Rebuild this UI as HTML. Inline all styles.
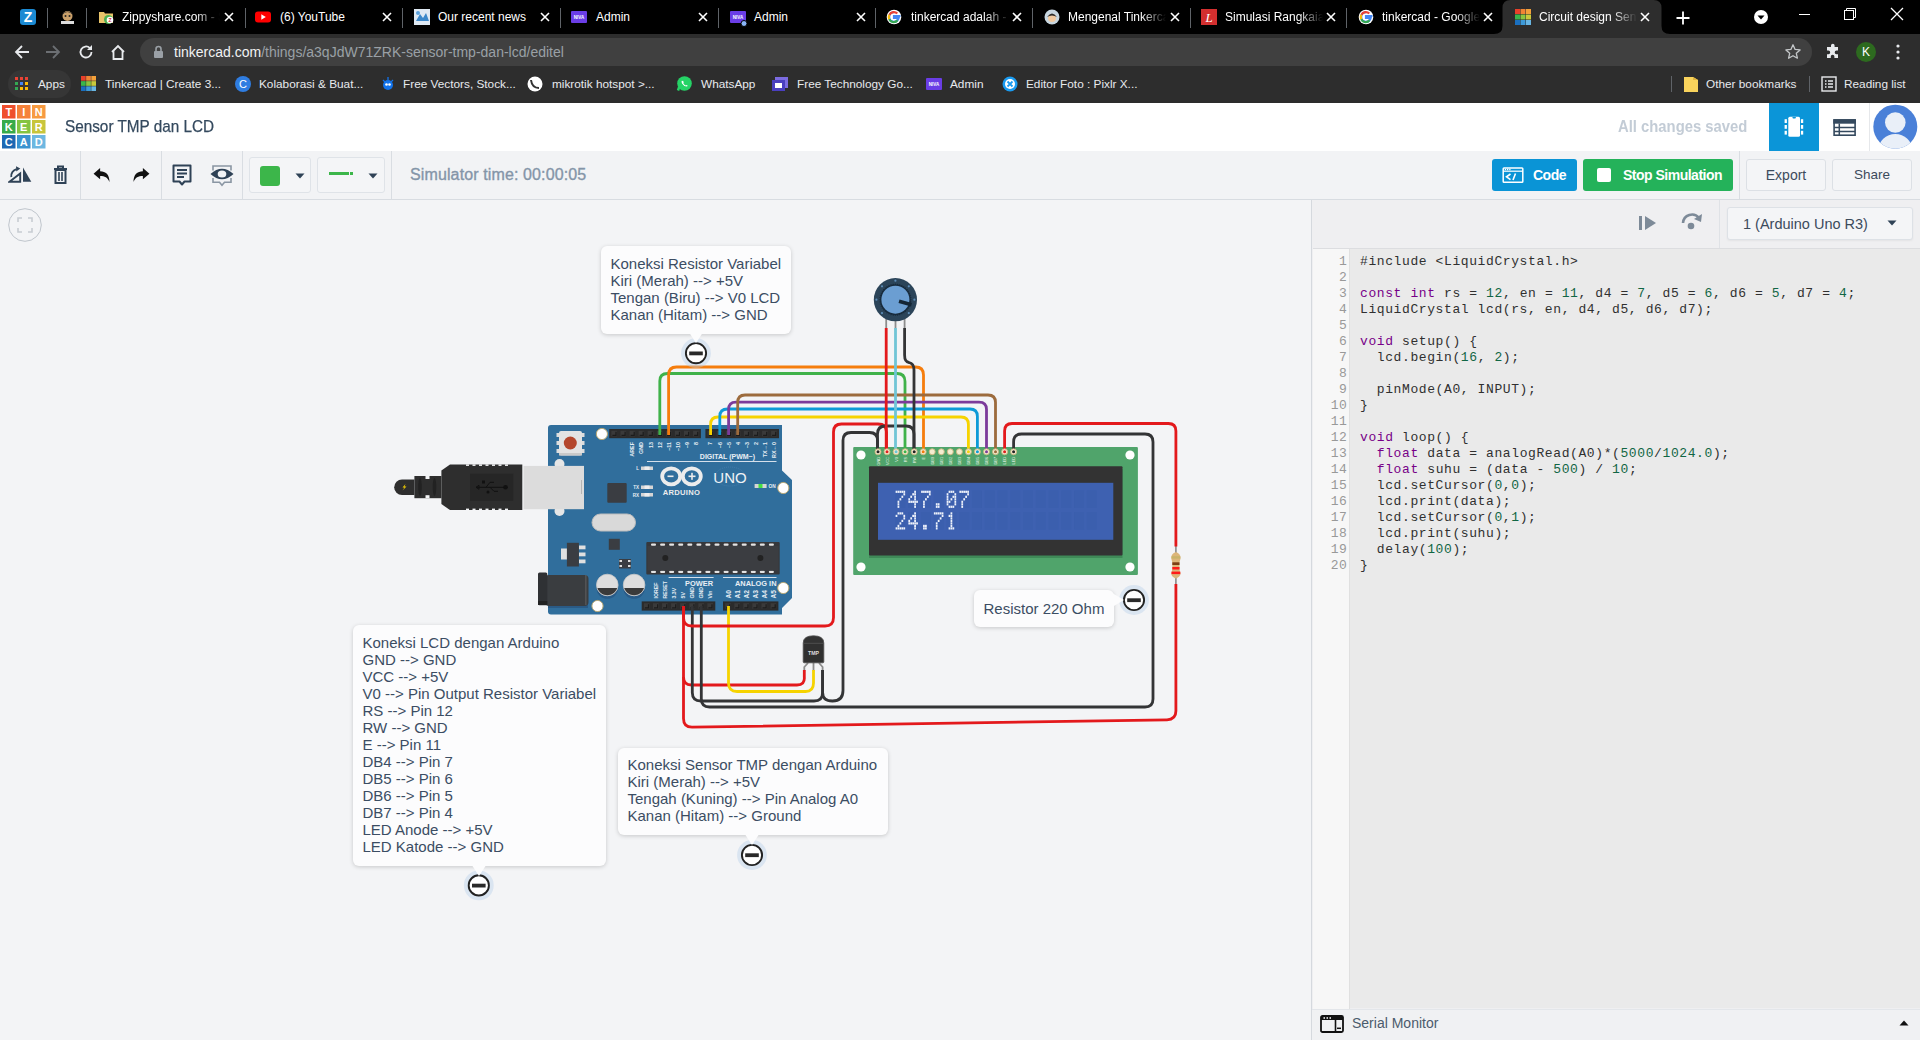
<!DOCTYPE html>
<html><head><meta charset="utf-8">
<style>
*{box-sizing:border-box;margin:0;padding:0}
html,body{width:1920px;height:1040px;overflow:hidden;background:#f3f4f6;font-family:"Liberation Sans",sans-serif}
.a{position:absolute}
#tabs{left:0;top:0;width:1920px;height:34px;background:#000}
#tb{left:0;top:34px;width:1920px;height:69px;background:#2d2d2d}
.tab{position:absolute;top:0;height:34px;color:#fff;font-size:12px;line-height:34px;white-space:nowrap}
.sep{position:absolute;top:8px;width:1px;height:20px;background:#5f6368}
.tt{position:absolute;top:0;overflow:hidden;width:88px}
.fade{-webkit-mask-image:linear-gradient(90deg,#000 75%,transparent)}
.cls{position:absolute;top:0;font-size:15px;color:#fff}
.bm{position:absolute;top:68px;height:32px;line-height:32px;color:#e8eaed;font-size:11.8px;white-space:nowrap}
#hdr{left:0;top:103px;width:1920px;height:48px;background:#fff;box-shadow:0 1px 3px rgba(0,0,0,.08)}
#tool{left:0;top:151px;width:1920px;height:49px;background:#f2f3f5;border-bottom:1px solid #d8dce1}
.vs{position:absolute;width:1px;background:#d9dde2}
#panel{left:1311px;top:200px;width:609px;height:840px;background:#efeff1;border-left:1px solid #d5d9de}
#code{left:1313px;top:248px;width:607px;height:760px;background:#eaeaea;border-top:1px solid #dcdde0}
#gut{left:1313px;top:249px;width:37px;height:760px;background:#f7f7f7;border-right:1px solid #e0e0e0}
pre{font-family:"Liberation Mono",monospace;font-size:13px;letter-spacing:0.6px;line-height:16px;color:#303030}
.k{color:#770088}.n{color:#116644}
.ln{position:absolute;left:1313px;top:254px;width:34.5px;text-align:right;font-family:"Liberation Mono",monospace;font-size:13px;letter-spacing:0.6px;line-height:16px;color:#999}
.note{position:absolute;background:#fcfcfd;border-radius:6px;box-shadow:0 1px 4px rgba(0,0,0,.18);color:#3b4d63;font-size:15px;line-height:17px;white-space:pre}
</style></head><body>
<div id="tabs" class="a"></div>
<div id="tb" class="a"></div>
<!-- ===== CHROME TAB STRIP ===== -->
<div class="a" style="left:20px;top:9px;width:16px;height:16px;background:#1b8ad3;border-radius:3px;color:#fff;font:bold 14px/16px 'Liberation Sans',sans-serif;text-align:center">Z</div>
<div class="sep" style="left:47px"></div>
<svg class="a" style="left:59px;top:9px" width="17" height="16" viewBox="0 0 17 16"><circle cx="8.5" cy="7" r="5" fill="#caa06a"/><path d="M3 6 Q8.5 0 14 6 L13 4 Q8.5 1 4 4Z" fill="#2b2b2b"/><circle cx="6.5" cy="7" r="1" fill="#222"/><circle cx="10.5" cy="7" r="1" fill="#222"/><rect x="2" y="12" width="13" height="3" fill="#ddd"/></svg>
<div class="sep" style="left:86px"></div>
<!-- Zippyshare -->
<svg class="a" style="left:98px;top:9px" width="16" height="16" viewBox="0 0 16 16"><path d="M1 3h5l1 1.5h8v9.5H1z" fill="#e9c46a"/><circle cx="10.5" cy="10.5" r="4.5" fill="#4caf50"/><circle cx="12" cy="11" r="3.3" fill="#fff"/><text x="12" y="13" font-size="5" font-weight="bold" text-anchor="middle" fill="#d32f2f" font-family="Liberation Sans">Z</text></svg>
<div class="tab" style="left:122px"><div class="tt fade" style="width:98px">Zippyshare.com - Share</div></div>
<svg class="a" style="left:224px;top:12px" width="10" height="10" viewBox="0 0 10 10"><path d="M1 1L9 9M9 1L1 9" stroke="#fff" stroke-width="1.6"/></svg>
<div class="sep" style="left:245px"></div>
<!-- YouTube -->
<svg class="a" style="left:255px;top:10px" width="16" height="14" viewBox="0 0 16 14"><rect x="0" y="1.5" width="16" height="11" rx="3" fill="#f00"/><path d="M6.3 4.3v5.4L10.8 7z" fill="#fff"/></svg>
<div class="tab" style="left:280px">(6) YouTube</div>
<svg class="a" style="left:382px;top:12px" width="10" height="10" viewBox="0 0 10 10"><path d="M1 1L9 9M9 1L1 9" stroke="#fff" stroke-width="1.6"/></svg>
<div class="sep" style="left:402px"></div>
<!-- Our recent news -->
<svg class="a" style="left:414px;top:9px" width="16" height="16" viewBox="0 0 16 16"><rect width="16" height="16" fill="#dfe9f3"/><path d="M2 12 L6 5 L9 9 L12 4 L15 12Z" fill="#3b87c9"/><circle cx="4" cy="4" r="2" fill="#5aa0dc"/></svg>
<div class="tab" style="left:438px">Our recent news</div>
<svg class="a" style="left:540px;top:12px" width="10" height="10" viewBox="0 0 10 10"><path d="M1 1L9 9M9 1L1 9" stroke="#fff" stroke-width="1.6"/></svg>
<div class="sep" style="left:560px"></div>
<!-- Admin -->
<svg class="a" style="left:571px;top:9px" width="16" height="16" viewBox="0 0 16 16"><rect y="2" width="16" height="12" rx="1" fill="#6a3de6"/><text x="8" y="10" font-size="4.5" font-weight="bold" text-anchor="middle" fill="#fff" font-family="Liberation Sans">NIVA</text></svg>
<div class="tab" style="left:596px">Admin</div>
<svg class="a" style="left:698px;top:12px" width="10" height="10" viewBox="0 0 10 10"><path d="M1 1L9 9M9 1L1 9" stroke="#fff" stroke-width="1.6"/></svg>
<div class="sep" style="left:718px"></div>
<svg class="a" style="left:730px;top:9px" width="18" height="18" viewBox="0 0 18 18"><rect y="2" width="16" height="12" rx="1" fill="#6a3de6"/><text x="8" y="10" font-size="4.5" font-weight="bold" text-anchor="middle" fill="#fff" font-family="Liberation Sans">NIVA</text><circle cx="14" cy="14.5" r="3" fill="#8ab4f8" stroke="#000" stroke-width="1"/></svg>
<div class="tab" style="left:754px">Admin</div>
<svg class="a" style="left:856px;top:12px" width="10" height="10" viewBox="0 0 10 10"><path d="M1 1L9 9M9 1L1 9" stroke="#fff" stroke-width="1.6"/></svg>
<div class="sep" style="left:875px"></div>
<!-- google -->
<svg class="a" style="left:886px;top:9px" width="16" height="16" viewBox="0 0 16 16"><circle cx="8" cy="8" r="7.3" fill="#fff"/><path d="M8 3.2a4.8 4.8 0 1 0 4.7 5.6H8V7h6.5" fill="none" stroke="#4285f4" stroke-width="2.2"/><path d="M3.5 5.8A4.8 4.8 0 0 1 11.3 4.6" fill="none" stroke="#ea4335" stroke-width="2.2"/><path d="M3.3 10.2A4.8 4.8 0 0 1 3.3 5.8" fill="none" stroke="#fbbc05" stroke-width="2.2"/><path d="M11.5 11.3A4.8 4.8 0 0 1 3.3 10.2" fill="none" stroke="#34a853" stroke-width="2.2"/></svg>
<div class="tab" style="left:911px"><div class="tt fade" style="width:98px">tinkercad adalah - Google</div></div>
<svg class="a" style="left:1012px;top:12px" width="10" height="10" viewBox="0 0 10 10"><path d="M1 1L9 9M9 1L1 9" stroke="#fff" stroke-width="1.6"/></svg>
<div class="sep" style="left:1032px"></div>
<!-- Mengenal -->
<svg class="a" style="left:1044px;top:9px" width="16" height="16" viewBox="0 0 16 16"><circle cx="8" cy="8" r="7.5" fill="#c8d6e0"/><circle cx="8" cy="9" r="4" fill="#f1c9a0"/><path d="M3 8 Q8 1 13 8 Q8 5 3 8Z" fill="#2b2b2b"/></svg>
<div class="tab" style="left:1068px"><div class="tt fade" style="width:98px">Mengenal Tinkercad</div></div>
<svg class="a" style="left:1170px;top:12px" width="10" height="10" viewBox="0 0 10 10"><path d="M1 1L9 9M9 1L1 9" stroke="#fff" stroke-width="1.6"/></svg>
<div class="sep" style="left:1190px"></div>
<!-- Simulasi -->
<svg class="a" style="left:1201px;top:9px" width="16" height="16" viewBox="0 0 16 16"><rect width="16" height="16" fill="#d32f2f"/><text x="8" y="13" font-size="13" font-style="italic" text-anchor="middle" fill="#fff" font-family="Liberation Serif">L</text></svg>
<div class="tab" style="left:1225px"><div class="tt fade" style="width:98px">Simulasi Rangkaian</div></div>
<svg class="a" style="left:1326px;top:12px" width="10" height="10" viewBox="0 0 10 10"><path d="M1 1L9 9M9 1L1 9" stroke="#fff" stroke-width="1.6"/></svg>
<div class="sep" style="left:1346px"></div>
<svg class="a" style="left:1358px;top:9px" width="16" height="16" viewBox="0 0 16 16"><circle cx="8" cy="8" r="7.3" fill="#fff"/><path d="M8 3.2a4.8 4.8 0 1 0 4.7 5.6H8V7h6.5" fill="none" stroke="#4285f4" stroke-width="2.2"/><path d="M3.5 5.8A4.8 4.8 0 0 1 11.3 4.6" fill="none" stroke="#ea4335" stroke-width="2.2"/><path d="M3.3 10.2A4.8 4.8 0 0 1 3.3 5.8" fill="none" stroke="#fbbc05" stroke-width="2.2"/><path d="M11.5 11.3A4.8 4.8 0 0 1 3.3 10.2" fill="none" stroke="#34a853" stroke-width="2.2"/></svg>
<div class="tab" style="left:1382px"><div class="tt fade" style="width:98px">tinkercad - Google Search</div></div>
<svg class="a" style="left:1483px;top:12px" width="10" height="10" viewBox="0 0 10 10"><path d="M1 1L9 9M9 1L1 9" stroke="#fff" stroke-width="1.6"/></svg>
<!-- active tab -->
<svg class="a" style="left:1490px;top:0" width="190" height="34" viewBox="1490 0 190 34"><path d="M1494,34 Q1502.5,34 1502.5,26 V8 Q1502.5,0 1510.5,0 H1653.5 Q1661.5,0 1661.5,8 V26 Q1661.5,34 1670,34 Z" fill="#2d2d2d"/></svg>
<svg class="a" style="left:1515px;top:9px" width="16" height="16" viewBox="0 0 16 16"><rect x="0" y="0" width="5" height="5" fill="#e8402a"/><rect x="5.5" y="0" width="5" height="5" fill="#f08434"/><rect x="11" y="0" width="5" height="5" fill="#f4a13a"/><rect x="0" y="5.5" width="5" height="5" fill="#3ab54a"/><rect x="5.5" y="5.5" width="5" height="5" fill="#8bc53f"/><rect x="11" y="5.5" width="5" height="5" fill="#c9c93b"/><rect x="0" y="11" width="5" height="5" fill="#1a6fbf"/><rect x="5.5" y="11" width="5" height="5" fill="#3d9ad9"/><rect x="11" y="11" width="5" height="5" fill="#69b6e3"/></svg>
<div class="tab" style="left:1539px"><div class="tt fade" style="width:98px">Circuit design Sensor TMP</div></div>
<svg class="a" style="left:1640px;top:12px" width="10" height="10" viewBox="0 0 10 10"><path d="M1 1L9 9M9 1L1 9" stroke="#fff" stroke-width="1.6"/></svg>
<svg class="a" style="left:1676px;top:11px" width="14" height="14" viewBox="0 0 14 14"><path d="M7,0.5 V13.5 M0.5,7 H13.5" stroke="#fff" stroke-width="1.8"/></svg>
<svg class="a" style="left:1753px;top:9px" width="16" height="16" viewBox="0 0 16 16"><circle cx="8" cy="8" r="7" fill="#fff"/><path d="M4.5 6.5h7L8 10.5z" fill="#000"/></svg>
<div class="a" style="left:1799px;top:14px;width:11px;height:1px;background:#fff"></div>
<svg class="a" style="left:1844px;top:8px" width="12" height="12" viewBox="0 0 12 12"><rect x="0.5" y="2.5" width="9" height="9" fill="none" stroke="#fff"/><path d="M2.5 2.5V0.5h9v9h-2" fill="none" stroke="#fff"/></svg>
<svg class="a" style="left:1890px;top:7px" width="14" height="14" viewBox="0 0 14 14"><path d="M1 1L13 13M13 1L1 13" stroke="#fff" stroke-width="1.3"/></svg>

<!-- ===== TOOLBAR ===== -->
<svg class="a" style="left:13px;top:43px" width="18" height="18" viewBox="0 0 18 18"><path d="M16 9H3M9 3L3 9l6 6" fill="none" stroke="#e8eaed" stroke-width="1.8"/></svg>
<svg class="a" style="left:44px;top:43px" width="18" height="18" viewBox="0 0 18 18"><path d="M2 9h13M9 3l6 6-6 6" fill="none" stroke="#6c6f73" stroke-width="1.8"/></svg>
<svg class="a" style="left:77px;top:43px" width="18" height="18" viewBox="0 0 18 18"><path d="M14.5 9A5.5 5.5 0 1 1 12.9 5.1" fill="none" stroke="#e8eaed" stroke-width="1.8"/><path d="M15 2v5h-5z" fill="#e8eaed"/></svg>
<svg class="a" style="left:109px;top:43px" width="18" height="18" viewBox="0 0 18 18"><path d="M3 9L9 3l6 6M4.5 8v8h9V8" fill="none" stroke="#e8eaed" stroke-width="1.8" stroke-linejoin="miter"/></svg>
<div class="a" style="left:140px;top:38px;width:1672px;height:28px;background:#404040;border-radius:14px"></div>
<svg class="a" style="left:153px;top:45px" width="11" height="14" viewBox="0 0 11 14"><rect x="1" y="6" width="9" height="7" rx="1" fill="#9aa0a6"/><path d="M3 6V4a2.5 2.5 0 0 1 5 0v2" fill="none" stroke="#9aa0a6" stroke-width="1.6"/></svg>
<div class="a" style="left:174px;top:43px;font-size:14px;line-height:18px;color:#9aa0a6;white-space:nowrap"><span style="color:#f1f3f4">tinkercad.com</span>/things/a3qJdW71ZRK-sensor-tmp-dan-lcd/editel</div>
<svg class="a" style="left:1784px;top:43px" width="18" height="18" viewBox="0 0 18 18"><path d="M9 1.8l2.1 4.6 5 .5-3.8 3.4 1.1 4.9L9 12.7l-4.4 2.5 1.1-4.9L1.9 6.9l5-.5z" fill="none" stroke="#c4c7c9" stroke-width="1.3" stroke-linejoin="round"/></svg>
<svg class="a" style="left:1824px;top:43px" width="18" height="18" viewBox="0 0 18 18"><path d="M7 2.5a1.8 1.8 0 0 1 3.6 0V4H14v3.6h-1.5a1.8 1.8 0 0 0 0 3.6H14V15H10.4v-1.5a1.8 1.8 0 0 0-3.6 0V15H3v-3.8h1.4a1.8 1.8 0 0 0 0-3.6H3V4h4z" fill="#e8eaed"/></svg>
<div class="a" style="left:1856px;top:42px;width:20px;height:20px;border-radius:50%;background:#2d6a1f;color:#fff;font-size:12px;line-height:20px;text-align:center">K</div>
<svg class="a" style="left:1896px;top:44px" width="4" height="16" viewBox="0 0 4 16"><circle cx="2" cy="2" r="1.6" fill="#e8eaed"/><circle cx="2" cy="8" r="1.6" fill="#e8eaed"/><circle cx="2" cy="14" r="1.6" fill="#e8eaed"/></svg>

<!-- ===== BOOKMARKS ===== -->
<div class="a" style="left:8px;top:70px;width:63px;height:28px;border-radius:14px;background:#363636"></div>
<svg class="a" style="left:15px;top:77px" width="14" height="14" viewBox="0 0 14 14"><g><rect x="0" y="0" width="3" height="3" fill="#ea4335"/><rect x="5" y="0" width="3" height="3" fill="#ea4335"/><rect x="10" y="0" width="3" height="3" fill="#ea4335"/><rect x="0" y="5" width="3" height="3" fill="#34a853"/><rect x="5" y="5" width="3" height="3" fill="#4285f4"/><rect x="10" y="5" width="3" height="3" fill="#fbbc05"/><rect x="0" y="10" width="3" height="3" fill="#34a853"/><rect x="5" y="10" width="3" height="3" fill="#fbbc05"/><rect x="10" y="10" width="3" height="3" fill="#fbbc05"/></g></svg>
<div class="bm" style="left:38px">Apps</div>
<svg class="a" style="left:81px;top:76px" width="15" height="15" viewBox="0 0 16 16"><rect x="0" y="0" width="5" height="5" fill="#e8402a"/><rect x="5.5" y="0" width="5" height="5" fill="#f08434"/><rect x="11" y="0" width="5" height="5" fill="#f4a13a"/><rect x="0" y="5.5" width="5" height="5" fill="#3ab54a"/><rect x="5.5" y="5.5" width="5" height="5" fill="#8bc53f"/><rect x="11" y="5.5" width="5" height="5" fill="#c9c93b"/><rect x="0" y="11" width="5" height="5" fill="#1a6fbf"/><rect x="5.5" y="11" width="5" height="5" fill="#3d9ad9"/><rect x="11" y="11" width="5" height="5" fill="#69b6e3"/></svg>
<div class="bm" style="left:105px">Tinkercad | Create 3...</div>
<div class="a" style="left:235px;top:76px;width:16px;height:16px;border-radius:50%;background:#2f7de1;color:#fff;font-size:11px;line-height:16px;text-align:center">C</div>
<div class="bm" style="left:259px">Kolaborasi &amp; Buat...</div>
<svg class="a" style="left:380px;top:76px" width="16" height="16" viewBox="0 0 16 16"><circle cx="8" cy="9" r="5" fill="#1273eb"/><circle cx="6.5" cy="8.5" r="1.3" fill="#fff"/><circle cx="9.5" cy="8.5" r="1.3" fill="#fff"/><path d="M3 4l2 2M13 4l-2 2M8 1v3" stroke="#1273eb" stroke-width="1.3"/></svg>
<div class="bm" style="left:403px">Free Vectors, Stock...</div>
<svg class="a" style="left:527px;top:76px" width="16" height="16" viewBox="0 0 16 16"><circle cx="8" cy="8" r="7.5" fill="#fff"/><path d="M4 4 Q5 12 12 12" fill="none" stroke="#333" stroke-width="2"/></svg>
<div class="bm" style="left:552px">mikrotik hotspot &gt;...</div>
<svg class="a" style="left:676px;top:75px" width="17" height="17" viewBox="0 0 17 17"><circle cx="8.5" cy="8.5" r="7.3" fill="#25d366"/><path d="M2 15.5l1.2-3.6" stroke="#25d366" stroke-width="2.5"/><path d="M6 5.5q-1 1 0 3 2 3 4.5 3 1 0 1.3-.8l-1.5-.8-.7.6q-1.6-.6-2.4-2.4l.6-.7-.7-1.6q-.6 0-1.1.3z" fill="#fff"/></svg>
<div class="bm" style="left:701px">WhatsApp</div>
<svg class="a" style="left:772px;top:76px" width="17" height="16" viewBox="0 0 17 16"><rect x="3" y="1" width="13" height="11" fill="#7b6be0"/><rect x="0" y="4" width="13" height="11" fill="#4a3fbf"/><rect x="3" y="7" width="7" height="5" fill="#fff"/></svg>
<div class="bm" style="left:797px">Free Technology Go...</div>
<svg class="a" style="left:926px;top:76px" width="16" height="16" viewBox="0 0 16 16"><rect y="2" width="16" height="12" rx="1" fill="#6a3de6"/><text x="8" y="10" font-size="4.5" font-weight="bold" text-anchor="middle" fill="#fff" font-family="Liberation Sans">NIVA</text></svg>
<div class="bm" style="left:950px">Admin</div>
<svg class="a" style="left:1002px;top:76px" width="16" height="16" viewBox="0 0 16 16"><circle cx="8" cy="8" r="7.5" fill="#1a9bf0"/><circle cx="8" cy="8" r="5" fill="#fff"/><path d="M5.5 5.5l5 5M10.5 5.5l-5 5" stroke="#1a9bf0" stroke-width="1.8"/></svg>
<div class="bm" style="left:1026px">Editor Foto : Pixlr X...</div>
<div class="a" style="left:1671px;top:76px;width:1px;height:16px;background:#5f6368"></div>
<svg class="a" style="left:1684px;top:76px" width="14" height="16" viewBox="0 0 14 16"><path d="M0 1h9l5 3v12H0z" fill="#f9d35c"/><path d="M9 1v3h5z" fill="#e0b540"/></svg>
<div class="bm" style="left:1706px">Other bookmarks</div>
<div class="a" style="left:1809px;top:76px;width:1px;height:16px;background:#5f6368"></div>
<svg class="a" style="left:1821px;top:76px" width="16" height="16" viewBox="0 0 16 16"><rect x="1" y="1" width="14" height="14" fill="none" stroke="#e8eaed" stroke-width="1.4"/><path d="M4 5h1.5M7 5h5M4 8h1.5M7 8h5M4 11h1.5M7 11h5" stroke="#e8eaed" stroke-width="1.3"/></svg>
<div class="bm" style="left:1844px">Reading list</div>

<div id="hdr" class="a"></div>
<div id="tool" class="a"></div>
<div id="panel" class="a"></div>
<div id="code" class="a"></div>
<div id="gut" class="a"></div>
<!--CIRCUIT-->
<svg class="a" style="left:0;top:0" width="1311" height="1040" viewBox="0 0 1311 1040" font-family="Liberation Sans">
<defs><filter id="sh" x="-10%" y="-10%" width="120%" height="130%"><feDropShadow dx="0" dy="1" stdDeviation="1.5" flood-color="#000" flood-opacity="0.16"/></filter></defs>
<path d="M551,425 H782 V470.5 L792,480 V598 L782,608 V614.5 H551 Q548,614.5 548,611.5 V428 Q548,425 551,425Z" fill="#306e9c"/>
<circle cx="559.5" cy="464" r="5" fill="#e6e6e6"/><circle cx="559.5" cy="511" r="5" fill="#e6e6e6"/>
<rect x="523.6" y="465.9" width="60.4" height="43.3" fill="#dcdcdc"/>
<rect x="581" y="480" width="0.8" height="14" fill="#aaa"/>
<path d="M450,464.4 H522.3 V510.1 H450 L441.4,504 V470.5Z" fill="#2e2e2e"/>
<rect x="466.0" y="464.4" width="3" height="1.5" fill="#f3f4f6"/><rect x="466.0" y="508.6" width="3" height="1.5" fill="#f3f4f6"/>
<rect x="472.5" y="464.4" width="3" height="1.5" fill="#f3f4f6"/><rect x="472.5" y="508.6" width="3" height="1.5" fill="#f3f4f6"/>
<rect x="479.0" y="464.4" width="3" height="1.5" fill="#f3f4f6"/><rect x="479.0" y="508.6" width="3" height="1.5" fill="#f3f4f6"/>
<rect x="485.5" y="464.4" width="3" height="1.5" fill="#f3f4f6"/><rect x="485.5" y="508.6" width="3" height="1.5" fill="#f3f4f6"/>
<rect x="492.0" y="464.4" width="3" height="1.5" fill="#f3f4f6"/><rect x="492.0" y="508.6" width="3" height="1.5" fill="#f3f4f6"/>
<rect x="498.5" y="464.4" width="3" height="1.5" fill="#f3f4f6"/><rect x="498.5" y="508.6" width="3" height="1.5" fill="#f3f4f6"/>
<rect x="505.0" y="464.4" width="3" height="1.5" fill="#f3f4f6"/><rect x="505.0" y="508.6" width="3" height="1.5" fill="#f3f4f6"/>
<rect x="470" y="473.7" width="43.3" height="27" fill="#262626"/>
<path d="M476,487.3 H508 M476,487.3 l3,-2 v4z M486,487.3 l4,-5 h4 M490,487.3 l4,4 h4" fill="none" stroke="#111" stroke-width="1"/><circle cx="505.5" cy="487.3" r="2.3" fill="#111"/><rect x="482" y="480.5" width="3" height="3" fill="#111"/><circle cx="488" cy="492" r="1.5" fill="#111"/>
<rect x="414.4" y="476" width="27" height="22.2" fill="#2e2e2e"/>
<rect x="425.5" y="476" width="4" height="3" fill="#f3f4f6"/><rect x="425.5" y="495.2" width="4" height="3" fill="#f3f4f6"/>
<ellipse cx="420" cy="487" rx="1.8" ry="9" fill="#222"/><ellipse cx="434.5" cy="487" rx="1.8" ry="9" fill="#222"/>
<path d="M414.4,479.4 H402 A7.8,7.8 0 0 0 402,495 H414.4Z" fill="#2e2e2e"/>
<path d="M405.5,484 l-3,3.5 h2 l-2,3 l4,-4 h-2z" fill="#f5d000"/>
<rect x="556.5" y="433" width="3" height="4" fill="#ddd"/><rect x="556.5" y="441" width="3" height="4" fill="#ddd"/><rect x="556.5" y="449" width="3" height="4" fill="#ddd"/>
<rect x="581.5" y="433" width="3" height="4" fill="#ddd"/><rect x="581.5" y="441" width="3" height="4" fill="#ddd"/><rect x="581.5" y="449" width="3" height="4" fill="#ddd"/>
<rect x="559" y="431" width="23" height="24.5" rx="2" fill="#e3e3e3"/><rect x="559" y="453" width="23" height="2.5" fill="#c9c9c9"/>
<circle cx="570.3" cy="443" r="6.5" fill="#b4462c"/>
<circle cx="601.9" cy="434" r="5.6" fill="#fff" stroke="#b9a874" stroke-width="1"/>
<circle cx="783.3" cy="488" r="5.6" fill="#fff" stroke="#b9a874" stroke-width="1"/>
<circle cx="597.5" cy="606" r="5.6" fill="#fff" stroke="#b9a874" stroke-width="1"/>
<circle cx="783.3" cy="588" r="5.6" fill="#fff" stroke="#b9a874" stroke-width="1"/>
<rect x="609.2" y="429" width="91.7" height="9.2" fill="#2b2b2b"/>
<rect x="611.4" y="430.8" width="5.6" height="5.6" fill="#3a3a3a"/><path d="M612.4,435.4 h3.6 v-3.6" fill="none" stroke="#1c1c1c" stroke-width="1.2"/>
<rect x="620.5" y="430.8" width="5.6" height="5.6" fill="#3a3a3a"/><path d="M621.5,435.4 h3.6 v-3.6" fill="none" stroke="#1c1c1c" stroke-width="1.2"/>
<rect x="629.6" y="430.8" width="5.6" height="5.6" fill="#3a3a3a"/><path d="M630.6,435.4 h3.6 v-3.6" fill="none" stroke="#1c1c1c" stroke-width="1.2"/>
<rect x="638.6" y="430.8" width="5.6" height="5.6" fill="#3a3a3a"/><path d="M639.6,435.4 h3.6 v-3.6" fill="none" stroke="#1c1c1c" stroke-width="1.2"/>
<rect x="647.7" y="430.8" width="5.6" height="5.6" fill="#3a3a3a"/><path d="M648.7,435.4 h3.6 v-3.6" fill="none" stroke="#1c1c1c" stroke-width="1.2"/>
<rect x="656.8" y="430.8" width="5.6" height="5.6" fill="#3a3a3a"/><path d="M657.8,435.4 h3.6 v-3.6" fill="none" stroke="#1c1c1c" stroke-width="1.2"/>
<rect x="665.9" y="430.8" width="5.6" height="5.6" fill="#3a3a3a"/><path d="M666.9,435.4 h3.6 v-3.6" fill="none" stroke="#1c1c1c" stroke-width="1.2"/>
<rect x="674.9" y="430.8" width="5.6" height="5.6" fill="#3a3a3a"/><path d="M675.9,435.4 h3.6 v-3.6" fill="none" stroke="#1c1c1c" stroke-width="1.2"/>
<rect x="684.0" y="430.8" width="5.6" height="5.6" fill="#3a3a3a"/><path d="M685.0,435.4 h3.6 v-3.6" fill="none" stroke="#1c1c1c" stroke-width="1.2"/>
<rect x="693.1" y="430.8" width="5.6" height="5.6" fill="#3a3a3a"/><path d="M694.1,435.4 h3.6 v-3.6" fill="none" stroke="#1c1c1c" stroke-width="1.2"/>
<rect x="705.4" y="429" width="73.6" height="9.2" fill="#2b2b2b"/>
<rect x="707.6" y="430.8" width="5.6" height="5.6" fill="#3a3a3a"/><path d="M708.6,435.4 h3.6 v-3.6" fill="none" stroke="#1c1c1c" stroke-width="1.2"/>
<rect x="716.7" y="430.8" width="5.6" height="5.6" fill="#3a3a3a"/><path d="M717.7,435.4 h3.6 v-3.6" fill="none" stroke="#1c1c1c" stroke-width="1.2"/>
<rect x="725.8" y="430.8" width="5.6" height="5.6" fill="#3a3a3a"/><path d="M726.8,435.4 h3.6 v-3.6" fill="none" stroke="#1c1c1c" stroke-width="1.2"/>
<rect x="734.8" y="430.8" width="5.6" height="5.6" fill="#3a3a3a"/><path d="M735.8,435.4 h3.6 v-3.6" fill="none" stroke="#1c1c1c" stroke-width="1.2"/>
<rect x="743.9" y="430.8" width="5.6" height="5.6" fill="#3a3a3a"/><path d="M744.9,435.4 h3.6 v-3.6" fill="none" stroke="#1c1c1c" stroke-width="1.2"/>
<rect x="753.0" y="430.8" width="5.6" height="5.6" fill="#3a3a3a"/><path d="M754.0,435.4 h3.6 v-3.6" fill="none" stroke="#1c1c1c" stroke-width="1.2"/>
<rect x="762.1" y="430.8" width="5.6" height="5.6" fill="#3a3a3a"/><path d="M763.1,435.4 h3.6 v-3.6" fill="none" stroke="#1c1c1c" stroke-width="1.2"/>
<rect x="771.1" y="430.8" width="5.6" height="5.6" fill="#3a3a3a"/><path d="M772.1,435.4 h3.6 v-3.6" fill="none" stroke="#1c1c1c" stroke-width="1.2"/>
<rect x="641.7" y="601.4" width="73.6" height="9.2" fill="#2b2b2b"/>
<rect x="643.9" y="603.2" width="5.6" height="5.6" fill="#3a3a3a"/><path d="M644.9,607.8 h3.6 v-3.6" fill="none" stroke="#1c1c1c" stroke-width="1.2"/>
<rect x="653.0" y="603.2" width="5.6" height="5.6" fill="#3a3a3a"/><path d="M654.0,607.8 h3.6 v-3.6" fill="none" stroke="#1c1c1c" stroke-width="1.2"/>
<rect x="662.1" y="603.2" width="5.6" height="5.6" fill="#3a3a3a"/><path d="M663.1,607.8 h3.6 v-3.6" fill="none" stroke="#1c1c1c" stroke-width="1.2"/>
<rect x="671.1" y="603.2" width="5.6" height="5.6" fill="#3a3a3a"/><path d="M672.1,607.8 h3.6 v-3.6" fill="none" stroke="#1c1c1c" stroke-width="1.2"/>
<rect x="680.2" y="603.2" width="5.6" height="5.6" fill="#3a3a3a"/><path d="M681.2,607.8 h3.6 v-3.6" fill="none" stroke="#1c1c1c" stroke-width="1.2"/>
<rect x="689.3" y="603.2" width="5.6" height="5.6" fill="#3a3a3a"/><path d="M690.3,607.8 h3.6 v-3.6" fill="none" stroke="#1c1c1c" stroke-width="1.2"/>
<rect x="698.4" y="603.2" width="5.6" height="5.6" fill="#3a3a3a"/><path d="M699.4,607.8 h3.6 v-3.6" fill="none" stroke="#1c1c1c" stroke-width="1.2"/>
<rect x="707.4" y="603.2" width="5.6" height="5.6" fill="#3a3a3a"/><path d="M708.4,607.8 h3.6 v-3.6" fill="none" stroke="#1c1c1c" stroke-width="1.2"/>
<rect x="723.0" y="601.4" width="55.4" height="9.2" fill="#2b2b2b"/>
<rect x="725.2" y="603.2" width="5.6" height="5.6" fill="#3a3a3a"/><path d="M726.2,607.8 h3.6 v-3.6" fill="none" stroke="#1c1c1c" stroke-width="1.2"/>
<rect x="734.3" y="603.2" width="5.6" height="5.6" fill="#3a3a3a"/><path d="M735.3,607.8 h3.6 v-3.6" fill="none" stroke="#1c1c1c" stroke-width="1.2"/>
<rect x="743.4" y="603.2" width="5.6" height="5.6" fill="#3a3a3a"/><path d="M744.4,607.8 h3.6 v-3.6" fill="none" stroke="#1c1c1c" stroke-width="1.2"/>
<rect x="752.4" y="603.2" width="5.6" height="5.6" fill="#3a3a3a"/><path d="M753.4,607.8 h3.6 v-3.6" fill="none" stroke="#1c1c1c" stroke-width="1.2"/>
<rect x="761.5" y="603.2" width="5.6" height="5.6" fill="#3a3a3a"/><path d="M762.5,607.8 h3.6 v-3.6" fill="none" stroke="#1c1c1c" stroke-width="1.2"/>
<rect x="770.6" y="603.2" width="5.6" height="5.6" fill="#3a3a3a"/><path d="M771.6,607.8 h3.6 v-3.6" fill="none" stroke="#1c1c1c" stroke-width="1.2"/>
<text transform="translate(634.4,442) rotate(-90)" font-size="5.4" fill="#e8eef4" text-anchor="end" font-weight="bold">AREF</text>
<text transform="translate(643.4,442) rotate(-90)" font-size="5.4" fill="#e8eef4" text-anchor="end" font-weight="bold">GND</text>
<text transform="translate(652.5,442) rotate(-90)" font-size="5.4" fill="#e8eef4" text-anchor="end" font-weight="bold">13</text>
<text transform="translate(661.6,442) rotate(-90)" font-size="5.4" fill="#e8eef4" text-anchor="end" font-weight="bold">12</text>
<text transform="translate(670.7,442) rotate(-90)" font-size="5.4" fill="#e8eef4" text-anchor="end" font-weight="bold">~11</text>
<text transform="translate(679.7,442) rotate(-90)" font-size="5.4" fill="#e8eef4" text-anchor="end" font-weight="bold">~10</text>
<text transform="translate(688.8,442) rotate(-90)" font-size="5.4" fill="#e8eef4" text-anchor="end" font-weight="bold">~9</text>
<text transform="translate(697.9,442) rotate(-90)" font-size="5.4" fill="#e8eef4" text-anchor="end" font-weight="bold">8</text>
<text transform="translate(712.4,442) rotate(-90)" font-size="5.4" fill="#e8eef4" text-anchor="end" font-weight="bold">7</text>
<text transform="translate(721.5,442) rotate(-90)" font-size="5.4" fill="#e8eef4" text-anchor="end" font-weight="bold">~6</text>
<text transform="translate(730.6,442) rotate(-90)" font-size="5.4" fill="#e8eef4" text-anchor="end" font-weight="bold">~5</text>
<text transform="translate(739.6,442) rotate(-90)" font-size="5.4" fill="#e8eef4" text-anchor="end" font-weight="bold">4</text>
<text transform="translate(748.7,442) rotate(-90)" font-size="5.4" fill="#e8eef4" text-anchor="end" font-weight="bold">~3</text>
<text transform="translate(757.8,442) rotate(-90)" font-size="5.4" fill="#e8eef4" text-anchor="end" font-weight="bold">2</text>
<text transform="translate(766.9,442) rotate(-90)" font-size="5.4" fill="#e8eef4" text-anchor="end" font-weight="bold">TX→1</text>
<text transform="translate(775.9,442) rotate(-90)" font-size="5.4" fill="#e8eef4" text-anchor="end" font-weight="bold">RX←0</text>
<text x="755" y="459" font-size="7" font-weight="bold" fill="#e8eef4" text-anchor="end">DIGITAL (PWM~)</text>
<rect x="647" y="461" width="129.5" height="0.9" fill="#e8eef4"/>
<rect x="641" y="466.5" width="12" height="3.5" fill="#d5d5d5"/><rect x="644.5" y="466.5" width="5" height="3.5" fill="#eee"/>
<text x="639" y="470.0" font-size="4.5" font-weight="bold" fill="#e8eef4" text-anchor="end">L</text>
<rect x="641" y="485.5" width="12" height="3.5" fill="#d5d5d5"/><rect x="644.5" y="485.5" width="5" height="3.5" fill="#eee"/>
<text x="639" y="489.0" font-size="4.5" font-weight="bold" fill="#e8eef4" text-anchor="end">TX</text>
<rect x="641" y="493" width="12" height="3.5" fill="#d5d5d5"/><rect x="644.5" y="493" width="5" height="3.5" fill="#eee"/>
<text x="639" y="496.5" font-size="4.5" font-weight="bold" fill="#e8eef4" text-anchor="end">RX</text>
<g fill="none" stroke="#ececec" stroke-width="3.8"><ellipse cx="671.2" cy="476.3" rx="9" ry="8" /><ellipse cx="691.8" cy="476.3" rx="9" ry="8"/></g>
<rect x="667.5" y="475.5" width="6" height="1.6" fill="#ececec"/><rect x="688.5" y="475.5" width="7" height="1.6" fill="#ececec"/><rect x="691.2" y="472.8" width="1.6" height="7" fill="#ececec"/>
<text x="681.5" y="494.8" font-size="7.6" font-weight="bold" fill="#ececec" text-anchor="middle" letter-spacing="0.3">ARDUINO</text>
<ellipse cx="730" cy="476.5" rx="15" ry="9.5" fill="none" stroke="#4a82b2" stroke-width="0.7" stroke-dasharray="1,1"/>
<text x="730" y="482.5" font-size="15" fill="#eef2f6" text-anchor="middle">UNO</text>
<rect x="754.6" y="484" width="12" height="4" fill="#d5d5d5"/><rect x="758.5" y="484" width="4" height="4" fill="#43e043"/>
<text x="768.5" y="488" font-size="4.8" font-weight="bold" fill="#e8eef4">ON</text>
<rect x="607.3" y="483" width="19.4" height="19.7" rx="1" fill="#3a3d42"/>
<rect x="592" y="514" width="43.5" height="17" rx="8.5" fill="#d9d9d9" stroke="#bdbdbd" stroke-width="1"/>
<rect x="608.8" y="538.8" width="11" height="11" fill="#3a3d42"/>
<rect x="561" y="548.5" width="6" height="11" fill="#e0e0e0"/><rect x="566.9" y="542.8" width="12" height="23.7" fill="#3a3d42"/>
<rect x="579" y="545.5" width="6.5" height="3.8" fill="#e0e0e0"/>
<rect x="579" y="552.5" width="6.5" height="3.8" fill="#e0e0e0"/>
<rect x="579" y="559.5" width="6.5" height="3.8" fill="#e0e0e0"/>
<rect x="619" y="559" width="12" height="9.5" fill="#3a3d42"/><rect x="619.5" y="560" width="2.5" height="2" fill="#ddd"/><rect x="619.5" y="565" width="2.5" height="2" fill="#ddd"/><rect x="628" y="560" width="2.5" height="2" fill="#ddd"/><rect x="628" y="565" width="2.5" height="2" fill="#ddd"/>
<rect x="646.3" y="542" width="133.4" height="32.6" rx="1" fill="#36383c"/>
<rect x="651.0" y="543.5" width="5" height="2.2" rx="1" fill="#e4e4e4"/><rect x="651.0" y="570.8" width="5" height="2.2" rx="1" fill="#e4e4e4"/>
<rect x="660.1" y="543.5" width="5" height="2.2" rx="1" fill="#e4e4e4"/><rect x="660.1" y="570.8" width="5" height="2.2" rx="1" fill="#e4e4e4"/>
<rect x="669.1" y="543.5" width="5" height="2.2" rx="1" fill="#e4e4e4"/><rect x="669.1" y="570.8" width="5" height="2.2" rx="1" fill="#e4e4e4"/>
<rect x="678.2" y="543.5" width="5" height="2.2" rx="1" fill="#e4e4e4"/><rect x="678.2" y="570.8" width="5" height="2.2" rx="1" fill="#e4e4e4"/>
<rect x="687.3" y="543.5" width="5" height="2.2" rx="1" fill="#e4e4e4"/><rect x="687.3" y="570.8" width="5" height="2.2" rx="1" fill="#e4e4e4"/>
<rect x="696.4" y="543.5" width="5" height="2.2" rx="1" fill="#e4e4e4"/><rect x="696.4" y="570.8" width="5" height="2.2" rx="1" fill="#e4e4e4"/>
<rect x="705.4" y="543.5" width="5" height="2.2" rx="1" fill="#e4e4e4"/><rect x="705.4" y="570.8" width="5" height="2.2" rx="1" fill="#e4e4e4"/>
<rect x="714.5" y="543.5" width="5" height="2.2" rx="1" fill="#e4e4e4"/><rect x="714.5" y="570.8" width="5" height="2.2" rx="1" fill="#e4e4e4"/>
<rect x="723.6" y="543.5" width="5" height="2.2" rx="1" fill="#e4e4e4"/><rect x="723.6" y="570.8" width="5" height="2.2" rx="1" fill="#e4e4e4"/>
<rect x="732.6" y="543.5" width="5" height="2.2" rx="1" fill="#e4e4e4"/><rect x="732.6" y="570.8" width="5" height="2.2" rx="1" fill="#e4e4e4"/>
<rect x="741.7" y="543.5" width="5" height="2.2" rx="1" fill="#e4e4e4"/><rect x="741.7" y="570.8" width="5" height="2.2" rx="1" fill="#e4e4e4"/>
<rect x="750.8" y="543.5" width="5" height="2.2" rx="1" fill="#e4e4e4"/><rect x="750.8" y="570.8" width="5" height="2.2" rx="1" fill="#e4e4e4"/>
<rect x="759.8" y="543.5" width="5" height="2.2" rx="1" fill="#e4e4e4"/><rect x="759.8" y="570.8" width="5" height="2.2" rx="1" fill="#e4e4e4"/>
<rect x="768.9" y="543.5" width="5" height="2.2" rx="1" fill="#e4e4e4"/><rect x="768.9" y="570.8" width="5" height="2.2" rx="1" fill="#e4e4e4"/>
<rect x="647.5" y="546" width="131" height="24.5" fill="#3b3d41"/>
<circle cx="665.3" cy="558" r="3" fill="#222"/><circle cx="760.4" cy="558" r="3" fill="#222"/>
<circle cx="607.3" cy="588" r="10.8" fill="#285b88"/>
<circle cx="607.3" cy="585" r="10.8" fill="#dedede"/>
<path d="M597.0,588 A10.8,10.8 0 0 0 617.5999999999999,588Z" fill="#3a3a3a"/>
<circle cx="607.3" cy="585" r="10.8" fill="none" stroke="#c8c8c8" stroke-width="0.8"/>
<circle cx="634.1" cy="588" r="10.8" fill="#285b88"/>
<circle cx="634.1" cy="585" r="10.8" fill="#dedede"/>
<path d="M623.8000000000001,588 A10.8,10.8 0 0 0 644.4,588Z" fill="#3a3a3a"/>
<circle cx="634.1" cy="585" r="10.8" fill="none" stroke="#c8c8c8" stroke-width="0.8"/>
<rect x="548" y="600" width="40" height="8" fill="#2a5a85"/>
<rect x="545" y="575" width="43.5" height="31" rx="4" fill="#3a3d40"/>
<rect x="538" y="572.6" width="9.3" height="32.7" rx="1.5" fill="#2f3134"/><rect x="538" y="601" width="9.3" height="4" fill="#222"/>
<rect x="585.5" y="575" width="0.8" height="30" fill="#6a6a6a"/>
<text x="713" y="585.6" font-size="7.4" font-weight="bold" fill="#e8eef4" text-anchor="end">POWER</text>
<text x="776.5" y="585.6" font-size="7.4" font-weight="bold" fill="#e8eef4" text-anchor="end">ANALOG IN</text>
<rect x="668.6" y="577" width="45" height="0.9" fill="#e8eef4"/><rect x="723" y="577" width="53.5" height="0.9" fill="#e8eef4"/>
<text transform="translate(657.8,598.5) rotate(-90)" font-size="5.2" fill="#e8eef4" font-weight="bold">IOREF</text>
<text transform="translate(666.9,598.5) rotate(-90)" font-size="5.2" fill="#e8eef4" font-weight="bold">RESET</text>
<text transform="translate(675.9,598.5) rotate(-90)" font-size="5.2" fill="#e8eef4" font-weight="bold">3.3V</text>
<text transform="translate(685.0,598.5) rotate(-90)" font-size="5.2" fill="#e8eef4" font-weight="bold">5V</text>
<text transform="translate(694.1,598.5) rotate(-90)" font-size="5.2" fill="#e8eef4" font-weight="bold">GND</text>
<text transform="translate(703.2,598.5) rotate(-90)" font-size="5.2" fill="#e8eef4" font-weight="bold">GND</text>
<text transform="translate(712.2,598.5) rotate(-90)" font-size="5.2" fill="#e8eef4" font-weight="bold">Vin</text>
<text transform="translate(730.5,598.5) rotate(-90)" font-size="6.6" fill="#e8eef4" font-weight="bold">A0</text>
<text transform="translate(739.6,598.5) rotate(-90)" font-size="6.6" fill="#e8eef4" font-weight="bold">A1</text>
<text transform="translate(748.7,598.5) rotate(-90)" font-size="6.6" fill="#e8eef4" font-weight="bold">A2</text>
<text transform="translate(757.7,598.5) rotate(-90)" font-size="6.6" fill="#e8eef4" font-weight="bold">A3</text>
<text transform="translate(766.8,598.5) rotate(-90)" font-size="6.6" fill="#e8eef4" font-weight="bold">A4</text>
<text transform="translate(775.9,598.5) rotate(-90)" font-size="6.6" fill="#e8eef4" font-weight="bold">A5</text>
<rect x="853.2" y="447" width="284.7" height="128" rx="1" fill="#50a46b"/>
<rect x="869" y="469" width="253.5" height="89" fill="#3f8a58"/>
<rect x="869" y="466.3" width="253.5" height="89.3" rx="1" fill="#333333"/>
<rect x="878" y="482.8" width="235.3" height="57" fill="#3e61b1"/>
<rect x="895.40" y="490.4" width="10" height="17.6" fill="#3b5fae"/>
<rect x="908.16" y="490.4" width="10" height="17.6" fill="#3b5fae"/>
<rect x="920.92" y="490.4" width="10" height="17.6" fill="#3b5fae"/>
<rect x="933.68" y="490.4" width="10" height="17.6" fill="#3b5fae"/>
<rect x="946.44" y="490.4" width="10" height="17.6" fill="#3b5fae"/>
<rect x="959.20" y="490.4" width="10" height="17.6" fill="#3b5fae"/>
<rect x="971.96" y="490.4" width="10" height="17.6" fill="#3b5fae"/>
<rect x="984.72" y="490.4" width="10" height="17.6" fill="#3b5fae"/>
<rect x="997.48" y="490.4" width="10" height="17.6" fill="#3b5fae"/>
<rect x="1010.24" y="490.4" width="10" height="17.6" fill="#3b5fae"/>
<rect x="1023.00" y="490.4" width="10" height="17.6" fill="#3b5fae"/>
<rect x="1035.76" y="490.4" width="10" height="17.6" fill="#3b5fae"/>
<rect x="1048.52" y="490.4" width="10" height="17.6" fill="#3b5fae"/>
<rect x="1061.28" y="490.4" width="10" height="17.6" fill="#3b5fae"/>
<rect x="1074.04" y="490.4" width="10" height="17.6" fill="#3b5fae"/>
<rect x="1086.80" y="490.4" width="10" height="17.6" fill="#3b5fae"/>
<rect x="895.40" y="512.0" width="10" height="17.6" fill="#3b5fae"/>
<rect x="908.16" y="512.0" width="10" height="17.6" fill="#3b5fae"/>
<rect x="920.92" y="512.0" width="10" height="17.6" fill="#3b5fae"/>
<rect x="933.68" y="512.0" width="10" height="17.6" fill="#3b5fae"/>
<rect x="946.44" y="512.0" width="10" height="17.6" fill="#3b5fae"/>
<rect x="959.20" y="512.0" width="10" height="17.6" fill="#3b5fae"/>
<rect x="971.96" y="512.0" width="10" height="17.6" fill="#3b5fae"/>
<rect x="984.72" y="512.0" width="10" height="17.6" fill="#3b5fae"/>
<rect x="997.48" y="512.0" width="10" height="17.6" fill="#3b5fae"/>
<rect x="1010.24" y="512.0" width="10" height="17.6" fill="#3b5fae"/>
<rect x="1023.00" y="512.0" width="10" height="17.6" fill="#3b5fae"/>
<rect x="1035.76" y="512.0" width="10" height="17.6" fill="#3b5fae"/>
<rect x="1048.52" y="512.0" width="10" height="17.6" fill="#3b5fae"/>
<rect x="1061.28" y="512.0" width="10" height="17.6" fill="#3b5fae"/>
<rect x="1074.04" y="512.0" width="10" height="17.6" fill="#3b5fae"/>
<rect x="1086.80" y="512.0" width="10" height="17.6" fill="#3b5fae"/>
<circle cx="861" cy="455" r="4.6" fill="#fff"/>
<circle cx="1130" cy="455" r="4.6" fill="#fff"/>
<circle cx="861" cy="567" r="4.6" fill="#fff"/>
<circle cx="1130" cy="567" r="4.6" fill="#fff"/>
<rect x="895.60" y="490.70" width="1.75" height="2.2" fill="#eef2fb"/>
<rect x="897.55" y="490.70" width="1.75" height="2.2" fill="#eef2fb"/>
<rect x="899.50" y="490.70" width="1.75" height="2.2" fill="#eef2fb"/>
<rect x="901.45" y="490.70" width="1.75" height="2.2" fill="#eef2fb"/>
<rect x="903.40" y="490.70" width="1.75" height="2.2" fill="#eef2fb"/>
<rect x="903.40" y="493.20" width="1.75" height="2.2" fill="#eef2fb"/>
<rect x="901.45" y="495.70" width="1.75" height="2.2" fill="#eef2fb"/>
<rect x="899.50" y="498.20" width="1.75" height="2.2" fill="#eef2fb"/>
<rect x="897.55" y="500.70" width="1.75" height="2.2" fill="#eef2fb"/>
<rect x="897.55" y="503.20" width="1.75" height="2.2" fill="#eef2fb"/>
<rect x="897.55" y="505.70" width="1.75" height="2.2" fill="#eef2fb"/>
<rect x="914.21" y="490.70" width="1.75" height="2.2" fill="#eef2fb"/>
<rect x="912.26" y="493.20" width="1.75" height="2.2" fill="#eef2fb"/>
<rect x="914.21" y="493.20" width="1.75" height="2.2" fill="#eef2fb"/>
<rect x="910.31" y="495.70" width="1.75" height="2.2" fill="#eef2fb"/>
<rect x="914.21" y="495.70" width="1.75" height="2.2" fill="#eef2fb"/>
<rect x="908.36" y="498.20" width="1.75" height="2.2" fill="#eef2fb"/>
<rect x="914.21" y="498.20" width="1.75" height="2.2" fill="#eef2fb"/>
<rect x="908.36" y="500.70" width="1.75" height="2.2" fill="#eef2fb"/>
<rect x="910.31" y="500.70" width="1.75" height="2.2" fill="#eef2fb"/>
<rect x="912.26" y="500.70" width="1.75" height="2.2" fill="#eef2fb"/>
<rect x="914.21" y="500.70" width="1.75" height="2.2" fill="#eef2fb"/>
<rect x="916.16" y="500.70" width="1.75" height="2.2" fill="#eef2fb"/>
<rect x="914.21" y="503.20" width="1.75" height="2.2" fill="#eef2fb"/>
<rect x="914.21" y="505.70" width="1.75" height="2.2" fill="#eef2fb"/>
<rect x="921.12" y="490.70" width="1.75" height="2.2" fill="#eef2fb"/>
<rect x="923.07" y="490.70" width="1.75" height="2.2" fill="#eef2fb"/>
<rect x="925.02" y="490.70" width="1.75" height="2.2" fill="#eef2fb"/>
<rect x="926.97" y="490.70" width="1.75" height="2.2" fill="#eef2fb"/>
<rect x="928.92" y="490.70" width="1.75" height="2.2" fill="#eef2fb"/>
<rect x="928.92" y="493.20" width="1.75" height="2.2" fill="#eef2fb"/>
<rect x="926.97" y="495.70" width="1.75" height="2.2" fill="#eef2fb"/>
<rect x="925.02" y="498.20" width="1.75" height="2.2" fill="#eef2fb"/>
<rect x="923.07" y="500.70" width="1.75" height="2.2" fill="#eef2fb"/>
<rect x="923.07" y="503.20" width="1.75" height="2.2" fill="#eef2fb"/>
<rect x="923.07" y="505.70" width="1.75" height="2.2" fill="#eef2fb"/>
<rect x="935.83" y="503.20" width="1.75" height="2.2" fill="#eef2fb"/>
<rect x="937.78" y="503.20" width="1.75" height="2.2" fill="#eef2fb"/>
<rect x="935.83" y="505.70" width="1.75" height="2.2" fill="#eef2fb"/>
<rect x="937.78" y="505.70" width="1.75" height="2.2" fill="#eef2fb"/>
<rect x="948.59" y="490.70" width="1.75" height="2.2" fill="#eef2fb"/>
<rect x="950.54" y="490.70" width="1.75" height="2.2" fill="#eef2fb"/>
<rect x="952.49" y="490.70" width="1.75" height="2.2" fill="#eef2fb"/>
<rect x="946.64" y="493.20" width="1.75" height="2.2" fill="#eef2fb"/>
<rect x="954.44" y="493.20" width="1.75" height="2.2" fill="#eef2fb"/>
<rect x="946.64" y="495.70" width="1.75" height="2.2" fill="#eef2fb"/>
<rect x="952.49" y="495.70" width="1.75" height="2.2" fill="#eef2fb"/>
<rect x="954.44" y="495.70" width="1.75" height="2.2" fill="#eef2fb"/>
<rect x="946.64" y="498.20" width="1.75" height="2.2" fill="#eef2fb"/>
<rect x="950.54" y="498.20" width="1.75" height="2.2" fill="#eef2fb"/>
<rect x="954.44" y="498.20" width="1.75" height="2.2" fill="#eef2fb"/>
<rect x="946.64" y="500.70" width="1.75" height="2.2" fill="#eef2fb"/>
<rect x="948.59" y="500.70" width="1.75" height="2.2" fill="#eef2fb"/>
<rect x="954.44" y="500.70" width="1.75" height="2.2" fill="#eef2fb"/>
<rect x="946.64" y="503.20" width="1.75" height="2.2" fill="#eef2fb"/>
<rect x="954.44" y="503.20" width="1.75" height="2.2" fill="#eef2fb"/>
<rect x="948.59" y="505.70" width="1.75" height="2.2" fill="#eef2fb"/>
<rect x="950.54" y="505.70" width="1.75" height="2.2" fill="#eef2fb"/>
<rect x="952.49" y="505.70" width="1.75" height="2.2" fill="#eef2fb"/>
<rect x="959.40" y="490.70" width="1.75" height="2.2" fill="#eef2fb"/>
<rect x="961.35" y="490.70" width="1.75" height="2.2" fill="#eef2fb"/>
<rect x="963.30" y="490.70" width="1.75" height="2.2" fill="#eef2fb"/>
<rect x="965.25" y="490.70" width="1.75" height="2.2" fill="#eef2fb"/>
<rect x="967.20" y="490.70" width="1.75" height="2.2" fill="#eef2fb"/>
<rect x="967.20" y="493.20" width="1.75" height="2.2" fill="#eef2fb"/>
<rect x="965.25" y="495.70" width="1.75" height="2.2" fill="#eef2fb"/>
<rect x="963.30" y="498.20" width="1.75" height="2.2" fill="#eef2fb"/>
<rect x="961.35" y="500.70" width="1.75" height="2.2" fill="#eef2fb"/>
<rect x="961.35" y="503.20" width="1.75" height="2.2" fill="#eef2fb"/>
<rect x="961.35" y="505.70" width="1.75" height="2.2" fill="#eef2fb"/>
<rect x="897.55" y="512.30" width="1.75" height="2.2" fill="#eef2fb"/>
<rect x="899.50" y="512.30" width="1.75" height="2.2" fill="#eef2fb"/>
<rect x="901.45" y="512.30" width="1.75" height="2.2" fill="#eef2fb"/>
<rect x="895.60" y="514.80" width="1.75" height="2.2" fill="#eef2fb"/>
<rect x="903.40" y="514.80" width="1.75" height="2.2" fill="#eef2fb"/>
<rect x="903.40" y="517.30" width="1.75" height="2.2" fill="#eef2fb"/>
<rect x="901.45" y="519.80" width="1.75" height="2.2" fill="#eef2fb"/>
<rect x="899.50" y="522.30" width="1.75" height="2.2" fill="#eef2fb"/>
<rect x="897.55" y="524.80" width="1.75" height="2.2" fill="#eef2fb"/>
<rect x="895.60" y="527.30" width="1.75" height="2.2" fill="#eef2fb"/>
<rect x="897.55" y="527.30" width="1.75" height="2.2" fill="#eef2fb"/>
<rect x="899.50" y="527.30" width="1.75" height="2.2" fill="#eef2fb"/>
<rect x="901.45" y="527.30" width="1.75" height="2.2" fill="#eef2fb"/>
<rect x="903.40" y="527.30" width="1.75" height="2.2" fill="#eef2fb"/>
<rect x="914.21" y="512.30" width="1.75" height="2.2" fill="#eef2fb"/>
<rect x="912.26" y="514.80" width="1.75" height="2.2" fill="#eef2fb"/>
<rect x="914.21" y="514.80" width="1.75" height="2.2" fill="#eef2fb"/>
<rect x="910.31" y="517.30" width="1.75" height="2.2" fill="#eef2fb"/>
<rect x="914.21" y="517.30" width="1.75" height="2.2" fill="#eef2fb"/>
<rect x="908.36" y="519.80" width="1.75" height="2.2" fill="#eef2fb"/>
<rect x="914.21" y="519.80" width="1.75" height="2.2" fill="#eef2fb"/>
<rect x="908.36" y="522.30" width="1.75" height="2.2" fill="#eef2fb"/>
<rect x="910.31" y="522.30" width="1.75" height="2.2" fill="#eef2fb"/>
<rect x="912.26" y="522.30" width="1.75" height="2.2" fill="#eef2fb"/>
<rect x="914.21" y="522.30" width="1.75" height="2.2" fill="#eef2fb"/>
<rect x="916.16" y="522.30" width="1.75" height="2.2" fill="#eef2fb"/>
<rect x="914.21" y="524.80" width="1.75" height="2.2" fill="#eef2fb"/>
<rect x="914.21" y="527.30" width="1.75" height="2.2" fill="#eef2fb"/>
<rect x="923.07" y="524.80" width="1.75" height="2.2" fill="#eef2fb"/>
<rect x="925.02" y="524.80" width="1.75" height="2.2" fill="#eef2fb"/>
<rect x="923.07" y="527.30" width="1.75" height="2.2" fill="#eef2fb"/>
<rect x="925.02" y="527.30" width="1.75" height="2.2" fill="#eef2fb"/>
<rect x="933.88" y="512.30" width="1.75" height="2.2" fill="#eef2fb"/>
<rect x="935.83" y="512.30" width="1.75" height="2.2" fill="#eef2fb"/>
<rect x="937.78" y="512.30" width="1.75" height="2.2" fill="#eef2fb"/>
<rect x="939.73" y="512.30" width="1.75" height="2.2" fill="#eef2fb"/>
<rect x="941.68" y="512.30" width="1.75" height="2.2" fill="#eef2fb"/>
<rect x="941.68" y="514.80" width="1.75" height="2.2" fill="#eef2fb"/>
<rect x="939.73" y="517.30" width="1.75" height="2.2" fill="#eef2fb"/>
<rect x="937.78" y="519.80" width="1.75" height="2.2" fill="#eef2fb"/>
<rect x="935.83" y="522.30" width="1.75" height="2.2" fill="#eef2fb"/>
<rect x="935.83" y="524.80" width="1.75" height="2.2" fill="#eef2fb"/>
<rect x="935.83" y="527.30" width="1.75" height="2.2" fill="#eef2fb"/>
<rect x="950.54" y="512.30" width="1.75" height="2.2" fill="#eef2fb"/>
<rect x="948.59" y="514.80" width="1.75" height="2.2" fill="#eef2fb"/>
<rect x="950.54" y="514.80" width="1.75" height="2.2" fill="#eef2fb"/>
<rect x="950.54" y="517.30" width="1.75" height="2.2" fill="#eef2fb"/>
<rect x="950.54" y="519.80" width="1.75" height="2.2" fill="#eef2fb"/>
<rect x="950.54" y="522.30" width="1.75" height="2.2" fill="#eef2fb"/>
<rect x="950.54" y="524.80" width="1.75" height="2.2" fill="#eef2fb"/>
<rect x="948.59" y="527.30" width="1.75" height="2.2" fill="#eef2fb"/>
<rect x="950.54" y="527.30" width="1.75" height="2.2" fill="#eef2fb"/>
<rect x="952.49" y="527.30" width="1.75" height="2.2" fill="#eef2fb"/>
<rect x="885.3" y="318" width="1.8" height="10" fill="#8d8d8d"/>
<rect x="894.6" y="318" width="1.8" height="10" fill="#8d8d8d"/>
<rect x="903.7" y="318" width="1.8" height="10" fill="#8d8d8d"/>
<circle cx="895.4" cy="299.7" r="21.6" fill="#2b4459"/>
<circle cx="914.4" cy="299.7" r="1.1" fill="#5d8db8"/>
<circle cx="908.8" cy="313.1" r="1.1" fill="#5d8db8"/>
<circle cx="882.0" cy="313.1" r="1.1" fill="#5d8db8"/>
<circle cx="876.4" cy="299.7" r="1.1" fill="#5d8db8"/>
<circle cx="882.0" cy="286.3" r="1.1" fill="#5d8db8"/>
<circle cx="895.4" cy="280.7" r="1.1" fill="#5d8db8"/>
<circle cx="908.8" cy="286.3" r="1.1" fill="#5d8db8"/>
<polygon points="911.80,299.70 910.36,300.77 911.63,302.03 910.06,302.89 911.14,304.32 909.45,304.94 910.32,306.51 908.57,306.89 909.20,308.57 907.41,308.69 907.79,310.44 906.01,310.31 906.14,312.09 904.39,311.71 904.27,313.50 902.59,312.87 902.21,314.62 900.64,313.75 900.02,315.44 898.59,314.36 897.73,315.93 896.47,314.66 895.40,316.10 894.33,314.66 893.07,315.93 892.21,314.36 890.78,315.44 890.16,313.75 888.59,314.62 888.21,312.87 886.53,313.50 886.41,311.71 884.66,312.09 884.79,310.31 883.01,310.44 883.39,308.69 881.60,308.57 882.23,306.89 880.48,306.51 881.35,304.94 879.66,304.32 880.74,302.89 879.17,302.03 880.44,300.77 879.00,299.70 880.44,298.63 879.17,297.37 880.74,296.51 879.66,295.08 881.35,294.46 880.48,292.89 882.23,292.51 881.60,290.83 883.39,290.71 883.01,288.96 884.79,289.09 884.66,287.31 886.41,287.69 886.53,285.90 888.21,286.53 888.59,284.78 890.16,285.65 890.78,283.96 892.21,285.04 893.07,283.47 894.33,284.74 895.40,283.30 896.47,284.74 897.73,283.47 898.59,285.04 900.02,283.96 900.64,285.65 902.21,284.78 902.59,286.53 904.27,285.90 904.39,287.69 906.14,287.31 906.01,289.09 907.79,288.96 907.41,290.71 909.20,290.83 908.57,292.51 910.32,292.89 909.45,294.46 911.14,295.08 910.06,296.51 911.63,297.37 910.36,298.63" fill="#172a3b"/>
<circle cx="895.4" cy="299.7" r="14" fill="#6b9ed2"/>
<path d="M899,301.2 L911.5,304.8" stroke="#142636" stroke-width="3.6"/>
<path d="M807.5,662.5 V663.5 L804.3,667 V671" fill="none" stroke="#8d8d8d" stroke-width="1.8"/>
<path d="M813.5,662.5 V671" fill="none" stroke="#8d8d8d" stroke-width="1.8"/>
<path d="M819.5,662.5 V663.5 L822.6,667 V671" fill="none" stroke="#8d8d8d" stroke-width="1.8"/>
<path d="M803.2,643 Q803.2,635.8 813.5,635.8 Q823.8,635.8 823.8,643 V661.8 Q823.8,662.8 822.8,662.8 H804.2 Q803.2,662.8 803.2,661.8Z" fill="#333" stroke="#4d4d4d" stroke-width="0.8"/>
<path d="M803.6,643.3 H823.4" stroke="#555" stroke-width="0.8"/>
<rect x="804.5" y="644" width="18" height="17.5" fill="#303030"/>
<text x="813.5" y="654.8" font-size="5.2" font-weight="bold" fill="#dedede" text-anchor="middle">TMP</text>
<path d="M1175.9,544 V586" stroke="#8a8a8a" stroke-width="1.6"/>
<path d="M1175.9,552 C1179,553 1180.5,555 1180.5,557.5 C1180.5,560 1179.5,561 1179.5,563 V569 C1179.5,571 1180.5,572 1180.5,573.5 C1180.5,576 1178,578 1175.9,578.5 C1173.8,578 1171.3,576 1171.3,573.5 C1171.3,572 1172.3,571 1172.3,569 V563 C1172.3,561 1171.3,560 1171.3,557.5 C1171.3,555 1172.8,553 1175.9,552Z" fill="#dcb67a"/>
<rect x="1171.5" y="556.2" width="8.8" height="2.4" fill="#c9b36a"/>
<rect x="1172.3" y="562.3" width="7.2" height="2.7" fill="#7b3f14"/>
<rect x="1172.3" y="567" width="7.2" height="2.5" fill="#ff1a1a"/>
<rect x="1171.5" y="571.6" width="8.8" height="2.5" fill="#ff1a1a"/>
<path d="M659.8,435 V381 Q659.8,373.5 667.5,373.5 H897 Q905,373.5 905,381.5 V452" fill="none" stroke="#3fb24a" stroke-width="2.8" stroke-linejoin="round"/>
<path d="M668.6,435 V375 Q668.6,367 676.5,367 H915.5 Q923.5,367 923.5,375 V452" fill="none" stroke="#f57d0d" stroke-width="2.8" stroke-linejoin="round"/>
<path d="M710.6,435 V424.5 Q710.6,417 718,417 H961 Q968.4,417 968.4,424.5 V452" fill="none" stroke="#f6d300" stroke-width="2.8" stroke-linejoin="round"/>
<path d="M719.8,435 V416.5 Q719.8,409 727.5,409 H970 Q977.4,409 977.4,416.5 V452" fill="none" stroke="#0e9ad7" stroke-width="2.8" stroke-linejoin="round"/>
<path d="M728.6,435 V409.5 Q728.6,402.2 736,402.2 H979 Q986.5,402.2 986.5,409.5 V452" fill="none" stroke="#7c3b9b" stroke-width="2.8" stroke-linejoin="round"/>
<path d="M737.7,435 V402.5 Q737.7,395 745,395 H988 Q995.5,395 995.5,402.5 V452" fill="none" stroke="#9c6b3d" stroke-width="2.8" stroke-linejoin="round"/>
<path d="M804.3,670 V677 Q805,685 797,685 H691.5 Q683.5,685 683.5,677" fill="none" stroke="#e3191c" stroke-width="2.8" stroke-linejoin="round"/>
<path d="M728.5,606 V683 Q728.5,691.5 737,691.5 H805.5 Q813.5,691.5 813.5,683 V670" fill="none" stroke="#f6d300" stroke-width="2.8" stroke-linejoin="round"/>
<path d="M692.3,606 V692.5 Q692.3,701 701,701 H814 Q822.6,701 822.6,692.5 V670" fill="none" stroke="#333436" stroke-width="2.8" stroke-linejoin="round"/>
<path d="M822.6,670 V692.5 Q822.6,701 832.5,701 Q843,701 843,690.5 V440.5 Q843,432.5 851,432.5 H869.5 Q877.5,432.5 877.5,440.5 V452" fill="none" stroke="#333436" stroke-width="2.8" stroke-linejoin="round"/>
<path d="M683.5,606 V617.5 Q683.5,626 692,626 H825 Q833.5,626 833.5,617.5 V432 Q833.5,424 841.5,424 H878 Q886.5,424 886.5,432 V452" fill="none" stroke="#e3191c" stroke-width="2.8" stroke-linejoin="round"/>
<path d="M877.5,452 V434 Q877.5,426 885.5,426 H906 Q914,426 914,434 V452" fill="none" stroke="#333436" stroke-width="2.8" stroke-linejoin="round"/>
<path d="M886.2,328 V452" fill="none" stroke="#e3191c" stroke-width="2.8" stroke-linejoin="round"/>
<path d="M895.5,328 V452" fill="none" stroke="#70c5d6" stroke-width="2.8" stroke-linejoin="round"/>
<path d="M904.6,328 V355 Q904.6,362 909,362.5 Q914,363.5 914,370 V452" fill="none" stroke="#333436" stroke-width="2.8" stroke-linejoin="round"/>
<path d="M1004.6,452 V431 Q1004.6,423.5 1012,423.5 H1168.4 Q1175.9,423.5 1175.9,431 V546.5" fill="none" stroke="#e3191c" stroke-width="2.8" stroke-linejoin="round"/>
<path d="M1175.9,584 V711 Q1175.9,719.5 1167,719.8 L692,727.2 Q683.5,727.2 683.5,718.5 V606" fill="none" stroke="#e3191c" stroke-width="2.8" stroke-linejoin="round"/>
<path d="M1013.6,452 V442 Q1013.6,434 1021.5,434 H1145 Q1153,434 1153,442 V699 Q1153,707 1145,707 H709.5 Q701.3,707 701.3,698.5 V606" fill="none" stroke="#333436" stroke-width="2.8" stroke-linejoin="round"/>
<circle cx="878.0" cy="451.8" r="3" fill="#f4ecd0" stroke="#cbb57e" stroke-width="0.9"/>
<circle cx="878.0" cy="451.8" r="1.5" fill="#222"/>
<text transform="translate(879.5,457) rotate(-90)" font-size="3.8" fill="#e9f4ec" text-anchor="end">GND</text>
<circle cx="887.0" cy="451.8" r="3" fill="#f4ecd0" stroke="#cbb57e" stroke-width="0.9"/>
<circle cx="887.0" cy="451.8" r="1.5" fill="#e02020"/>
<text transform="translate(888.5,457) rotate(-90)" font-size="3.8" fill="#e9f4ec" text-anchor="end">VCC</text>
<circle cx="896.1" cy="451.8" r="3" fill="#f4ecd0" stroke="#cbb57e" stroke-width="0.9"/>
<circle cx="896.1" cy="451.8" r="1.5" fill="#6ec6d8"/>
<text transform="translate(897.6,457) rotate(-90)" font-size="3.8" fill="#e9f4ec" text-anchor="end">V0</text>
<circle cx="905.1" cy="451.8" r="3" fill="#f4ecd0" stroke="#cbb57e" stroke-width="0.9"/>
<circle cx="905.1" cy="451.8" r="1.5" fill="#3cb44a"/>
<text transform="translate(906.6,457) rotate(-90)" font-size="3.8" fill="#e9f4ec" text-anchor="end">RS</text>
<circle cx="914.2" cy="451.8" r="3" fill="#f4ecd0" stroke="#cbb57e" stroke-width="0.9"/>
<circle cx="914.2" cy="451.8" r="1.5" fill="#222"/>
<text transform="translate(915.7,457) rotate(-90)" font-size="3.8" fill="#e9f4ec" text-anchor="end">RW</text>
<circle cx="923.2" cy="451.8" r="3" fill="#f4ecd0" stroke="#cbb57e" stroke-width="0.9"/>
<circle cx="923.2" cy="451.8" r="1.5" fill="#f47c0c"/>
<text transform="translate(924.7,457) rotate(-90)" font-size="3.8" fill="#e9f4ec" text-anchor="end">E</text>
<circle cx="932.2" cy="451.8" r="3" fill="#f4ecd0" stroke="#cbb57e" stroke-width="0.9"/>
<text transform="translate(933.7,457) rotate(-90)" font-size="3.8" fill="#e9f4ec" text-anchor="end">DB0</text>
<circle cx="941.3" cy="451.8" r="3" fill="#f4ecd0" stroke="#cbb57e" stroke-width="0.9"/>
<text transform="translate(942.8,457) rotate(-90)" font-size="3.8" fill="#e9f4ec" text-anchor="end">DB1</text>
<circle cx="950.3" cy="451.8" r="3" fill="#f4ecd0" stroke="#cbb57e" stroke-width="0.9"/>
<text transform="translate(951.8,457) rotate(-90)" font-size="3.8" fill="#e9f4ec" text-anchor="end">DB2</text>
<circle cx="959.4" cy="451.8" r="3" fill="#f4ecd0" stroke="#cbb57e" stroke-width="0.9"/>
<text transform="translate(960.9,457) rotate(-90)" font-size="3.8" fill="#e9f4ec" text-anchor="end">DB3</text>
<circle cx="968.4" cy="451.8" r="3" fill="#f4ecd0" stroke="#cbb57e" stroke-width="0.9"/>
<circle cx="968.4" cy="451.8" r="1.5" fill="#f5d20a"/>
<text transform="translate(969.9,457) rotate(-90)" font-size="3.8" fill="#e9f4ec" text-anchor="end">DB4</text>
<circle cx="977.4" cy="451.8" r="3" fill="#f4ecd0" stroke="#cbb57e" stroke-width="0.9"/>
<circle cx="977.4" cy="451.8" r="1.5" fill="#0d9bd8"/>
<text transform="translate(978.9,457) rotate(-90)" font-size="3.8" fill="#e9f4ec" text-anchor="end">DB5</text>
<circle cx="986.5" cy="451.8" r="3" fill="#f4ecd0" stroke="#cbb57e" stroke-width="0.9"/>
<circle cx="986.5" cy="451.8" r="1.5" fill="#7d3c98"/>
<text transform="translate(988.0,457) rotate(-90)" font-size="3.8" fill="#e9f4ec" text-anchor="end">DB6</text>
<circle cx="995.5" cy="451.8" r="3" fill="#f4ecd0" stroke="#cbb57e" stroke-width="0.9"/>
<circle cx="995.5" cy="451.8" r="1.5" fill="#9a6a3c"/>
<text transform="translate(997.0,457) rotate(-90)" font-size="3.8" fill="#e9f4ec" text-anchor="end">DB7</text>
<circle cx="1004.6" cy="451.8" r="3" fill="#f4ecd0" stroke="#cbb57e" stroke-width="0.9"/>
<circle cx="1004.6" cy="451.8" r="1.5" fill="#e02020"/>
<text transform="translate(1006.1,457) rotate(-90)" font-size="3.8" fill="#e9f4ec" text-anchor="end">LED</text>
<circle cx="1013.6" cy="451.8" r="3" fill="#f4ecd0" stroke="#cbb57e" stroke-width="0.9"/>
<circle cx="1013.6" cy="451.8" r="1.5" fill="#222"/>
<text transform="translate(1015.1,457) rotate(-90)" font-size="3.8" fill="#e9f4ec" text-anchor="end">LED</text>
<circle cx="696" cy="353.2" r="14.9" fill="#b8cfe9" fill-opacity="0.42"/>
<circle cx="696" cy="353.2" r="10.1" fill="#fff" stroke="#222" stroke-width="1.9"/>
<rect x="689.2" y="351.5" width="13.6" height="3.8" fill="#2a2a2a"/>
<circle cx="478.8" cy="885.4" r="14.9" fill="#b8cfe9" fill-opacity="0.42"/>
<circle cx="478.8" cy="885.4" r="10.1" fill="#fff" stroke="#222" stroke-width="1.9"/>
<rect x="472.0" y="883.6999999999999" width="13.6" height="3.8" fill="#2a2a2a"/>
<circle cx="752" cy="855" r="14.9" fill="#b8cfe9" fill-opacity="0.42"/>
<circle cx="752" cy="855" r="10.1" fill="#fff" stroke="#222" stroke-width="1.9"/>
<rect x="745.2" y="853.3" width="13.6" height="3.8" fill="#2a2a2a"/>
<circle cx="1134" cy="600" r="14.9" fill="#b8cfe9" fill-opacity="0.42"/>
<circle cx="1134" cy="600" r="10.1" fill="#fff" stroke="#222" stroke-width="1.9"/>
<rect x="1127.2" y="598.3" width="13.6" height="3.8" fill="#2a2a2a"/>
</svg>
<!--/CIRCUIT-->
<!--NOTES-->
<div class="note" style="left:601px;top:246px;width:190px;height:87.5px;padding:9px 0 0 9.5px">Koneksi Resistor Variabel
Kiri (Merah) --&gt; +5V
Tengan (Biru) --&gt; V0 LCD
Kanan (Hitam) --&gt; GND</div>
<svg class="a" style="left:688px;top:333px" width="16" height="11" viewBox="0 0 16 11"><path d="M1.5,0 H14.5 L8,10Z" fill="#fcfcfd"/></svg>
<div class="note" style="left:353px;top:625px;width:253px;height:241px;padding:9px 0 0 9.5px">Koneksi LCD dengan Arduino
GND --&gt; GND
VCC --&gt; +5V
V0 --&gt; Pin Output Resistor Variabel
RS --&gt; Pin 12
RW --&gt; GND
E --&gt; Pin 11
DB4 --&gt; Pin 7
DB5 --&gt; Pin 6
DB6 --&gt; Pin 5
DB7 --&gt; Pin 4
LED Anode --&gt; +5V
LED Katode --&gt; GND</div>
<svg class="a" style="left:471px;top:866px" width="16" height="11" viewBox="0 0 16 11"><path d="M1.5,0 H14.5 L8,10Z" fill="#fcfcfd"/></svg>
<div class="note" style="left:618px;top:747.5px;width:270px;height:87.5px;padding:8.5px 0 0 9.5px">Koneksi Sensor TMP dengan Arduino
Kiri (Merah) --&gt; +5V
Tengah (Kuning) --&gt; Pin Analog A0
Kanan (Hitam) --&gt; Ground</div>
<svg class="a" style="left:744px;top:835px" width="16" height="11" viewBox="0 0 16 11"><path d="M1.5,0 H14.5 L8,10Z" fill="#fcfcfd"/></svg>
<div class="note" style="left:974px;top:590px;width:140px;height:37px;padding:10px 0 0 9.5px">Resistor 220 Ohm</div>
<svg class="a" style="left:1113px;top:592px" width="12" height="16" viewBox="0 0 12 16"><path d="M0,1.5 V14.5 L11,8Z" fill="#fcfcfd"/></svg>

<!--/NOTES-->
<!-- ===== TINKERCAD HEADER ===== -->
<svg class="a" style="left:2px;top:105px" width="44" height="44" viewBox="0 0 44 44" font-family="Liberation Sans" font-weight="bold" font-size="11" text-anchor="middle" fill="#fff">
<rect x="0" y="0" width="13.5" height="13.5" fill="#ef4f2e"/><rect x="15" y="0" width="13.5" height="13.5" fill="#f5813a"/><rect x="30" y="0" width="13.5" height="13.5" fill="#f79a40"/>
<rect x="0" y="15" width="13.5" height="13.5" fill="#37ab4a"/><rect x="15" y="15" width="13.5" height="13.5" fill="#84c441"/><rect x="30" y="15" width="13.5" height="13.5" fill="#c8c53b"/>
<rect x="0" y="30" width="13.5" height="13.5" fill="#1d68b3"/><rect x="15" y="30" width="13.5" height="13.5" fill="#3a93d0"/><rect x="30" y="30" width="13.5" height="13.5" fill="#6db7e1"/>
<text x="6.75" y="11">T</text><text x="21.75" y="11">I</text><text x="36.75" y="11">N</text>
<text x="6.75" y="26">K</text><text x="21.75" y="26">E</text><text x="36.75" y="26">R</text>
<text x="6.75" y="41">C</text><text x="21.75" y="41">A</text><text x="36.75" y="41">D</text>
</svg>
<div class="a" style="left:65px;top:117px;font-size:17px;line-height:20px;color:#34495e;white-space:nowrap;transform:scaleX(0.9);transform-origin:0 0;-webkit-text-stroke:0.25px #34495e">Sensor TMP dan LCD</div>
<div class="a" style="left:1618px;top:116px;font-size:16.3px;font-weight:bold;line-height:20px;color:#c3ccd6;white-space:nowrap;transform:scaleX(0.91);transform-origin:0 0">All changes saved</div>
<div class="a" style="left:1769px;top:103px;width:50px;height:48px;background:#0b95d8"></div>
<svg class="a" style="left:1780px;top:113px" width="26" height="26" viewBox="1780 113 26 26"><rect x="1788.3" y="116.7" width="11.7" height="20" rx="1.5" fill="#fff"/><path d="M1792.3,117 h3.7 l-0.6,1.4 h-2.5z" fill="#0b95d8"/><g fill="#fff"><rect x="1784.6" y="119.2" width="2.3" height="3.8"/><rect x="1784.6" y="125" width="2.3" height="3.8"/><rect x="1784.6" y="130.8" width="2.3" height="3.8"/><rect x="1800.9" y="119.2" width="2.3" height="3.8"/><rect x="1800.9" y="125" width="2.3" height="3.8"/><rect x="1800.9" y="130.8" width="2.3" height="3.8"/></g></svg>
<svg class="a" style="left:1830px;top:116px" width="30" height="24" viewBox="1830 116 30 24"><rect x="1834.1" y="120" width="21" height="15.2" fill="none" stroke="#34495e" stroke-width="1.6"/><rect x="1833.3" y="119.2" width="22.6" height="4.5" fill="#34495e"/><path d="M1834,127.6 H1855 M1834,131.4 H1855 M1839.3,123.5 V135" stroke="#34495e" stroke-width="1.5"/></svg>
<div class="a" style="left:1869px;top:103px;width:1px;height:48px;background:#e6e8eb"></div>
<svg class="a" style="left:1873px;top:104px" width="46" height="46" viewBox="0 0 46 46"><defs><clipPath id="av"><circle cx="22.3" cy="22.7" r="22"/></clipPath></defs><circle cx="22.3" cy="22.7" r="22" fill="#4a80d8"/><g clip-path="url(#av)" fill="#e9eff8"><circle cx="22.3" cy="18.5" r="10.3"/><ellipse cx="22.3" cy="46" rx="17" ry="16"/></g></svg>

<!-- ===== TINKERCAD TOOLBAR ===== -->
<svg class="a" style="left:8px;top:166px" width="24" height="17" viewBox="0 0 24 17"><path d="M1.5,15.8 L12.2,7.5 V15.8Z" fill="none" stroke="#2f4256" stroke-width="1.9" stroke-linejoin="miter"/><path d="M3.3,11 A7 7 0 0 1 8.6,3.2" fill="none" stroke="#2f4256" stroke-width="1.9"/><path d="M8,0.3 L12.3,2.6 L8.3,5.6Z" fill="#2f4256"/><path d="M15,1.5 L23.3,15.8 H15Z" fill="#2f4256"/></svg>
<svg class="a" style="left:53px;top:165px" width="15" height="19" viewBox="0 0 15 19"><path d="M1 4h13M5 4V1.5h5V4" fill="none" stroke="#2f4256" stroke-width="2"/><rect x="2.5" y="5" width="10" height="13" fill="none" stroke="#2f4256" stroke-width="2"/><path d="M6 7v9M9 7v9" stroke="#2f4256" stroke-width="1.6"/></svg>
<div class="vs" style="left:80px;top:151px;height:48px"></div>
<svg class="a" style="left:93px;top:168px" width="18" height="15" viewBox="0 0 18 16"><path d="M0 6 L7 0 V3.5 C13 3.5 17 7 17 15 C15 10 12 8.5 7 8.5 V12Z" fill="#111"/></svg>
<svg class="a" style="left:132px;top:168px" width="18" height="15" viewBox="0 0 18 16"><path d="M18 6 L11 0 V3.5 C5 3.5 1 7 1 15 C3 10 6 8.5 11 8.5 V12Z" fill="#111"/></svg>
<div class="vs" style="left:161px;top:151px;height:48px"></div>
<svg class="a" style="left:172px;top:164px" width="20" height="22" viewBox="0 0 20 22"><path d="M1.5 1.5h17v16h-6l-2.5 3-2.5-3h-6z" fill="none" stroke="#2f4256" stroke-width="2" stroke-linejoin="round"/><path d="M5 6h10M5 9.5h10M5 13h7" stroke="#2f4256" stroke-width="1.8"/></svg>
<svg class="a" style="left:210px;top:165px" width="24" height="22" viewBox="0 0 24 22"><path d="M3,5.5 V1 H21 V5.5 M3,13 V17.2 H9.5 L12,20.2 L14.5,17.2 H21 V13" fill="none" stroke="#8a96a3" stroke-width="1.6"/><path d="M0.5,9 Q12,-1.5 23.5,9 Q12,19.5 0.5,9Z" fill="#2f4256"/><ellipse cx="12" cy="9" rx="4.3" ry="3.6" fill="#f2f3f5"/></svg>
<div class="vs" style="left:242px;top:151px;height:48px"></div>
<div class="a" style="left:249px;top:157px;width:62px;height:36px;border:1px solid #dfe3e8;border-radius:3px;background:#f4f5f7"></div>
<div class="a" style="left:260px;top:166px;width:20px;height:20px;border-radius:3px;background:#3cb64a"></div>
<svg class="a" style="left:295px;top:173px" width="10" height="6" viewBox="0 0 10 6"><path d="M0.5 0.5h9L5 5.5z" fill="#2f4256"/></svg>
<div class="a" style="left:317px;top:157px;width:68px;height:36px;border:1px solid #dfe3e8;border-radius:3px;background:#f4f5f7"></div>
<div class="a" style="left:329px;top:172px;width:20px;height:3px;background:#3cb64a"></div>
<div class="a" style="left:350px;top:172px;width:3px;height:3px;background:#3cb64a"></div>
<svg class="a" style="left:368px;top:173px" width="10" height="6" viewBox="0 0 10 6"><path d="M0.5 0.5h9L5 5.5z" fill="#2f4256"/></svg>
<div class="vs" style="left:391px;top:151px;height:48px"></div>
<div class="a" style="left:410px;top:165px;font-size:16px;line-height:19px;color:#8495a8;white-space:nowrap;letter-spacing:0.12px;-webkit-text-stroke:0.35px #8495a8">Simulator time: 00:00:05</div>

<div class="a" style="left:1492px;top:159px;width:85px;height:32px;background:#0a94d6;border-radius:3px"></div>
<svg class="a" style="left:1500px;top:165px" width="26" height="20" viewBox="1500 165 26 20"><rect x="1503.2" y="168" width="19.6" height="14.3" rx="0.8" fill="none" stroke="#fff" stroke-width="1.5"/><path d="M1503,171.2 H1523" stroke="#fff" stroke-width="1.2"/><g fill="#fff"><rect x="1504.8" y="168.9" width="1.3" height="1.3"/><rect x="1507" y="168.9" width="1.3" height="1.3"/><rect x="1509.2" y="168.9" width="1.3" height="1.3"/></g><path d="M1510.5,174 L1506.5,176.8 L1510.5,179.6 M1513,180 L1515.5,173.5" fill="none" stroke="#fff" stroke-width="1.6"/></svg>
<div class="a" style="left:1533px;top:166px;font-size:14px;font-weight:bold;letter-spacing:-0.5px;line-height:18px;color:#fff">Code</div>
<div class="a" style="left:1583px;top:159px;width:150px;height:32px;background:#24b25a;border-radius:3px"></div>
<div class="a" style="left:1597px;top:168px;width:14px;height:14px;background:#fff;border-radius:2px"></div>
<div class="a" style="left:1623px;top:166px;font-size:14px;font-weight:bold;letter-spacing:-0.5px;line-height:18px;color:#fff;white-space:nowrap">Stop Simulation</div>
<div class="vs" style="left:1739px;top:151px;height:48px"></div>
<div class="a" style="left:1746px;top:159px;width:80px;height:32px;border:1px solid #dce0e5;border-radius:3px;background:#f4f5f7;color:#3c4b5c;font-size:14px;line-height:30px;text-align:center">Export</div>
<div class="a" style="left:1832px;top:159px;width:80px;height:32px;border:1px solid #dce0e5;border-radius:3px;background:#f4f5f7;color:#3c4b5c;font-size:13.5px;line-height:30px;text-align:center">Share</div>

<!-- canvas fullscreen -->
<svg class="a" style="left:8px;top:208px" width="34" height="34" viewBox="0 0 34 34"><circle cx="17" cy="17" r="16.3" fill="none" stroke="#bfc5cc" stroke-width="1"/><path d="M10 14v-4h4M20 10h4v4M24 20v4h-4M14 24h-4v-4" fill="none" stroke="#c7ccd2" stroke-width="1.6"/></svg>

<!-- ===== CODE PANEL ===== -->
<svg class="a" style="left:1638px;top:214px" width="20" height="18" viewBox="0 0 20 18"><rect x="1" y="2" width="3" height="14" fill="#7d8a98"/><path d="M7 2 L18 9 L7 16Z" fill="#7d8a98"/></svg>
<svg class="a" style="left:1680px;top:212px" width="24" height="20" viewBox="0 0 24 20"><path d="M3 11 A9 9 0 0 1 19 6" fill="none" stroke="#7d8a98" stroke-width="2.6"/><path d="M22 2 L21 10 L14 7Z" fill="#7d8a98"/><circle cx="11" cy="14" r="3.3" fill="#7d8a98"/></svg>
<div class="vs" style="left:1719px;top:200px;height:48px;background:#dfe2e6"></div>
<div class="a" style="left:1727px;top:207px;width:186px;height:33px;border:1px solid #dde1e6;border-radius:3px;background:#f4f5f7;box-shadow:0 1px 2px rgba(0,0,0,.05)"></div>
<div class="a" style="left:1743px;top:215px;font-size:14.5px;line-height:19px;color:#3c4b5c;white-space:nowrap">1 (Arduino Uno R3)</div>
<svg class="a" style="left:1887px;top:220px" width="10" height="6" viewBox="0 0 10 6"><path d="M0.5 0.5h9L5 5.5z" fill="#2f4256"/></svg>

<div class="ln" style="white-space:pre">1
2
3
4
5
6
7
8
9
10
11
12
13
14
15
16
17
18
19
20</div>
<pre class="a" style="left:1360px;top:254px">#include &lt;LiquidCrystal.h&gt;

<span class="k">const</span> <span class="k">int</span> rs = <span class="n">12</span>, en = <span class="n">11</span>, d4 = <span class="n">7</span>, d5 = <span class="n">6</span>, d6 = <span class="n">5</span>, d7 = <span class="n">4</span>;
LiquidCrystal lcd(rs, en, d4, d5, d6, d7);

<span class="k">void</span> setup() {
  lcd.begin(<span class="n">16</span>, <span class="n">2</span>);

  pinMode(A0, INPUT);
}

<span class="k">void</span> loop() {
  <span class="k">float</span> data = analogRead(A0)*(<span class="n">5000</span>/<span class="n">1024.0</span>);
  <span class="k">float</span> suhu = (data - <span class="n">500</span>) / <span class="n">10</span>;
  lcd.setCursor(<span class="n">0</span>,<span class="n">0</span>);
  lcd.print(data);
  lcd.setCursor(<span class="n">0</span>,<span class="n">1</span>);
  lcd.print(suhu);
  delay(<span class="n">100</span>);
}</pre>

<div class="a" style="left:1312px;top:1009px;width:608px;height:31px;background:#f0f1f3;border-top:1px solid #e3e6ea"></div>
<svg class="a" style="left:1320px;top:1015px" width="24" height="18" viewBox="0 0 24 18"><rect x="1" y="1" width="22" height="16" rx="1.5" fill="none" stroke="#111" stroke-width="1.8"/><rect x="1" y="1" width="22" height="4" fill="#111"/><path d="M3.5 3h1.5M6.5 3h1.5M9.5 3h1.5" stroke="#fff" stroke-width="1.4"/><path d="M15.5 5v12" stroke="#111" stroke-width="1.6"/><path d="M17 13.3h4" stroke="#111" stroke-width="1.5"/></svg>
<div class="a" style="left:1352px;top:1015px;font-size:14px;line-height:17px;color:#4b5b6c;white-space:nowrap">Serial Monitor</div>
<svg class="a" style="left:1899px;top:1020px" width="10" height="6" viewBox="0 0 10 6"><path d="M0.5 5.5h9L5 0.5z" fill="#111"/></svg>

</body></html>
